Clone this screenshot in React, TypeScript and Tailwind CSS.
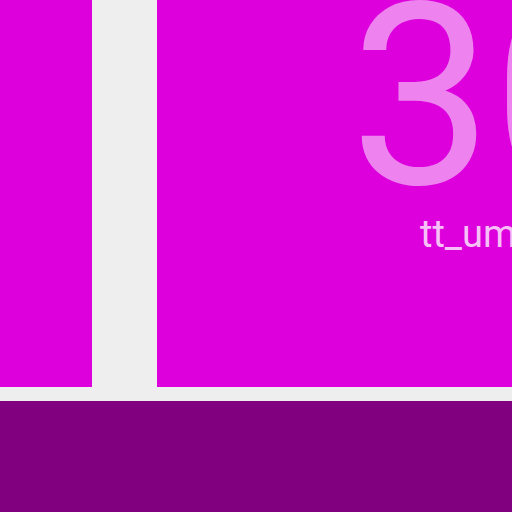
export default function App() {
  return (
    <div className="w-[512px] h-[512px] overflow-hidden bg-[#eeeeee] flex flex-col" style={{ fontFamily: 'Roboto, sans-serif' }}>
      <div className="h-[387px] flex gap-[65px] shrink-0">
        <div className="w-[92px] bg-[#dd00dd] shrink-0" />
        <div className="flex-1 bg-[#dd00dd] overflow-hidden">
          <div className="pl-[193px] whitespace-nowrap">
            <div className="text-[254px] leading-none text-[#ee82ee] -mt-[30px]">30</div>
            <div className="text-[38px] leading-none text-[#f8c0f8] pl-[70px] -mt-[9px]">tt_um_example</div>
          </div>
        </div>
      </div>
      <div className="h-[14px] shrink-0" />
      <div className="flex-1 bg-[#800080]" />
    </div>
  );
}
